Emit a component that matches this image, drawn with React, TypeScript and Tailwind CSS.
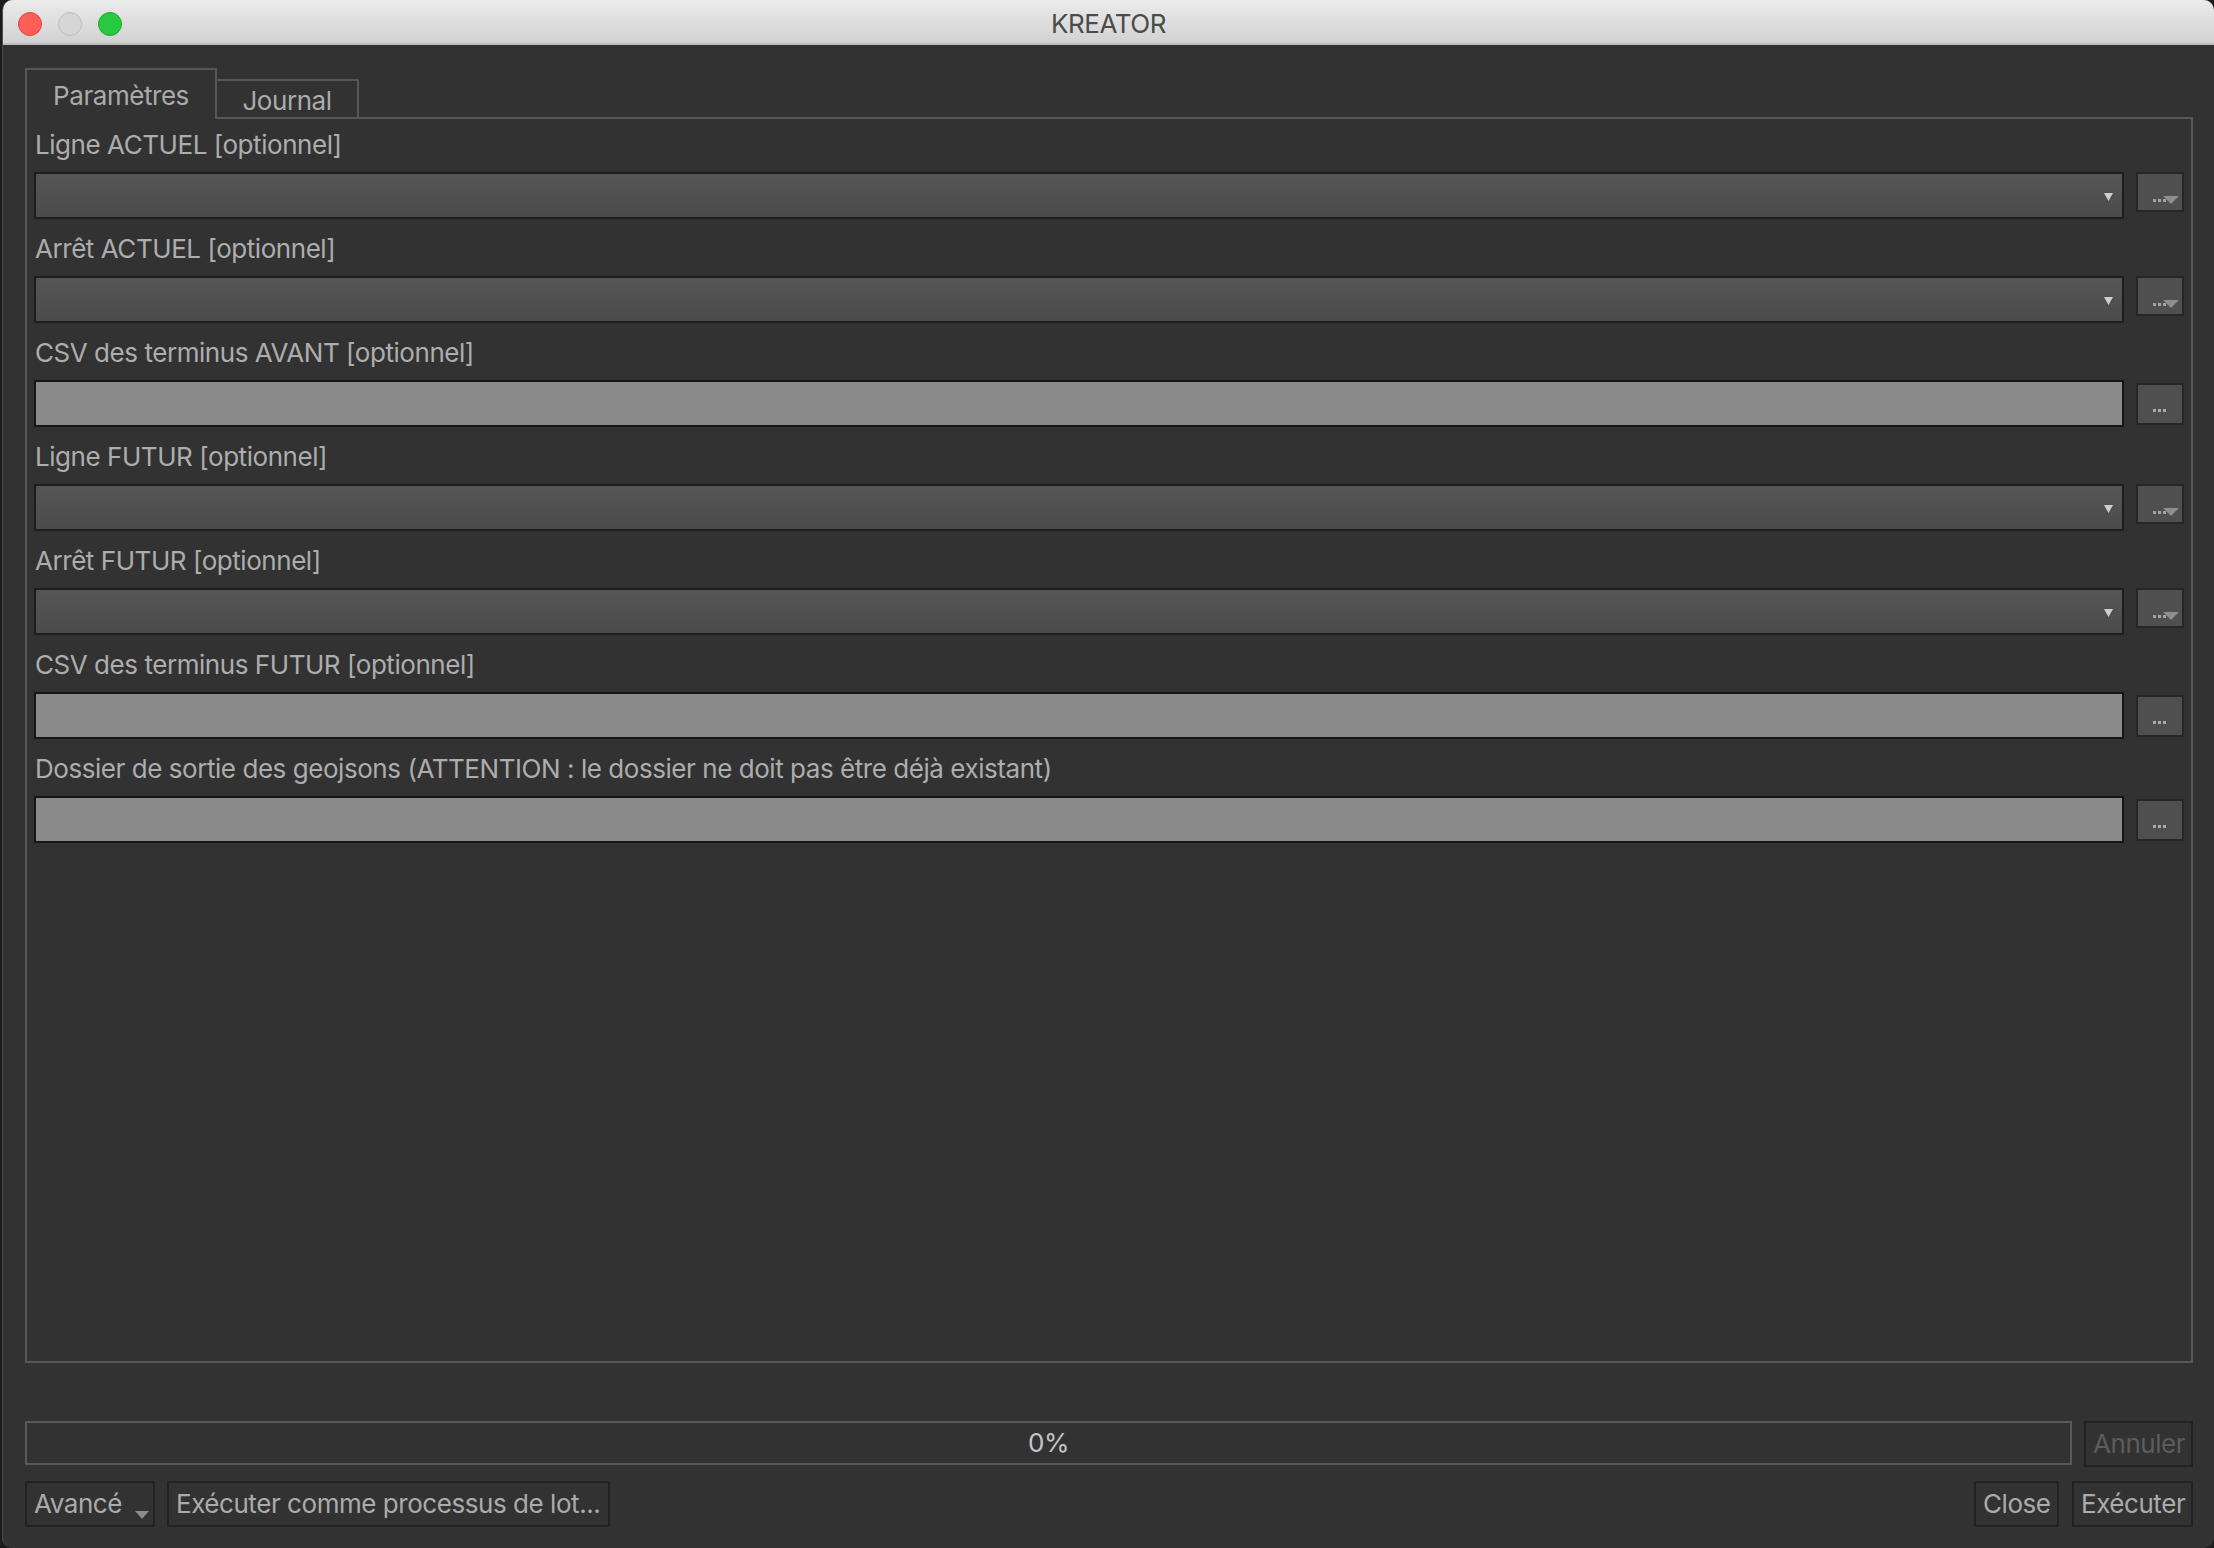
import React from "react";

const rows: { label: string; kind: "combo" | "text" }[] = [
  { label: "Ligne ACTUEL [optionnel]", kind: "combo" },
  { label: "Arrêt ACTUEL [optionnel]", kind: "combo" },
  { label: "CSV des terminus AVANT [optionnel]", kind: "text" },
  { label: "Ligne FUTUR [optionnel]", kind: "combo" },
  { label: "Arrêt FUTUR [optionnel]", kind: "combo" },
  { label: "CSV des terminus FUTUR [optionnel]", kind: "text" },
  {
    label: "Dossier de sortie des geojsons (ATTENTION : le dossier ne doit pas être déjà existant)",
    kind: "text",
  },
];

function ComboRow() {
  return (
    <div className="flex items-start gap-[12px]">
      <div className="relative h-[47px] flex-1 border-2 border-[#1d1d1d] bg-gradient-to-b from-[#555555] to-[#4b4b4b]">
        <svg className="absolute right-[9px] top-[19px]" width="9" height="8" viewBox="0 0 9 8">
          <path d="M0 0 H9 L4.5 8 Z" fill="#cfcfcf" />
        </svg>
      </div>
      <div className="relative h-[40px] w-[48px] border-2 border-[#262626] bg-[#4f4f4f]">
        <svg className="absolute left-[15px] top-[21px]" width="28" height="10" viewBox="0 0 28 10">
          <rect x="0" y="4" width="3" height="3" fill="#a2a2a2" />
          <rect x="5" y="4" width="3" height="3" fill="#a2a2a2" />
          <rect x="10" y="4" width="3" height="3" fill="#a2a2a2" />
          <path d="M10 1 H26 L18 9 Z" fill="#8e8e8e" />
        </svg>
      </div>
    </div>
  );
}

function TextRow() {
  return (
    <div className="flex items-center gap-[12px]">
      <div className="h-[47px] flex-1 border-2 border-[#161616] bg-[#8a8a8a]" />
      <div className="relative h-[42px] w-[48px] border-2 border-[#262626] bg-[#4f4f4f]">
        <svg className="absolute left-[15px] top-[24px]" width="16" height="4" viewBox="0 0 16 4">
          <rect x="0" y="0" width="3" height="3" fill="#a8a8a8" />
          <rect x="5" y="0" width="3" height="3" fill="#a8a8a8" />
          <rect x="10" y="0" width="3" height="3" fill="#a8a8a8" />
        </svg>
      </div>
    </div>
  );
}

function Btn({
  children,
  className = "",
  disabled = false,
}: {
  children: React.ReactNode;
  className?: string;
  disabled?: boolean;
}) {
  return (
    <div
      className={`flex h-[46px] shrink-0 items-center whitespace-nowrap border-2 border-[#222222] px-[7px] text-[26px] leading-[32px] ${
        disabled ? "text-[#5c5c5c]" : "text-[#ababab]"
      } ${className}`}
    >
      {children}
    </div>
  );
}

export default function App() {
  return (
    <div className="h-[1548px] w-[2214px] overflow-hidden bg-[#1c1c1c] pl-[2px] font-['Inter','Liberation_Sans',sans-serif] tracking-[-0.45px]">
      <div className="flex h-full flex-col overflow-hidden rounded-[10px] border-l border-[#4a4a4a] bg-[#323232]">
        <div className="relative flex h-[45px] shrink-0 items-start justify-center border-b-2 border-[#bdbdbd] bg-gradient-to-b from-[#ebebeb] to-[#d2d2d2] pt-[8px]">
          <div className="absolute left-[15px] top-[12px] flex gap-[16px]">
            <div className="h-[24px] w-[24px] rounded-full border border-[#e0443e] bg-[#ff5f57]" />
            <div className="h-[24px] w-[24px] rounded-full border border-[#bdbdbd] bg-[#d6d6d6]" />
            <div className="h-[24px] w-[24px] rounded-full border border-[#1aab29] bg-[#28c840]" />
          </div>
          <span className="text-[26px] leading-[32px] text-[#4b4b4b]">KREATOR</span>
        </div>

        <div className="flex flex-col pl-[22px] pr-[21px] pt-[23px]">
          <div className="flex h-[51px] items-end">
            <div className="flex h-[51px] w-[192px] items-start justify-center border-x-2 border-t-2 border-[#575757] pt-[10px] text-[26px] leading-[32px] text-[#ababab]">
              Paramètres
            </div>
            <div className="flex h-[40px] w-[142px] items-start justify-center border-r-2 border-t-2 border-b-2 border-[#575757] pt-[4px] text-[26px] leading-[32px] text-[#ababab]">
              Journal
            </div>
            <div className="flex-1 border-b-2 border-[#575757]" />
          </div>

          <div className="flex h-[1244px] flex-col border-x-2 border-b-2 border-[#575757] pl-[7px] pr-[7px] pt-[10px]">
            {rows.map((r) => (
              <div key={r.label} className="mb-[14px] flex flex-col gap-[11px]">
                <div className="h-[32px] pl-[1px] text-[26px] leading-[32px] text-[#adadad]">{r.label}</div>
                {r.kind === "combo" ? <ComboRow /> : <TextRow />}
              </div>
            ))}
          </div>

          <div className="mt-[58px] flex items-start gap-[12px]">
            <div className="flex h-[44px] flex-1 items-center justify-center border-2 border-[#595959] text-[26px] leading-[32px] text-[#c4c4c4]">
              0%
            </div>
            <Btn className="w-[109px]" disabled>
              Annuler
            </Btn>
          </div>

          <div className="mt-[14px] flex items-start">
            <Btn className="relative w-[130px]">
              Avancé
              <svg className="absolute left-[108px] top-[28px]" width="14" height="8" viewBox="0 0 14 8">
                <path d="M0 0 H14 L7 8 Z" fill="#8c8c8c" />
              </svg>
            </Btn>
            <Btn className="ml-[12px] w-[443px]">Exécuter comme processus de lot...</Btn>
            <div className="flex-1" />
            <Btn className="w-[85px]">Close</Btn>
            <Btn className="ml-[13px] w-[121px]">Exécuter</Btn>
          </div>
        </div>
      </div>
    </div>
  );
}
